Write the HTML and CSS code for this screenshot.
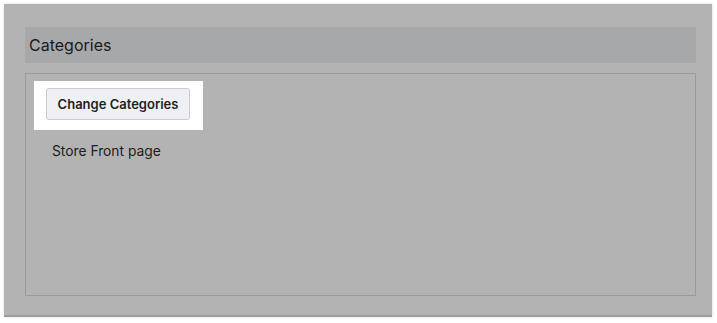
FILE: index.html
```html
<!DOCTYPE html>
<html lang="en">
<head>
    <meta charset="UTF-8">
    <meta name="viewport" content="width=device-width, initial-scale=1.0">
    <title>Categories</title>
    <link rel="stylesheet" href="styles.css">
</head>
<body>

    <!-- Categories panel -->
    <div class="panel">
        <div class="panel-header">Categories</div>

        <div class="panel-body">
            <div class="spotlight">
                <button class="btn" type="button">Change Categories</button>
            </div>
            <div class="category-item">Store Front page</div>
        </div>
    </div>

</body>
</html>
```

FILE: styles.css
```css
body {
    font-family: Inter, "Noto Sans", "Liberation Sans", Arial, sans-serif;
    margin: 0;
    padding: 0;
    background-color: #fff;
    color: #1c1c1e;
}

.panel {
    box-sizing: border-box;
    margin: 4px;
    width: 708px;
    height: 313px;
    padding: 23px 16px 0 21px;
    background-color: #b3b3b3;
    border-bottom: 2px solid #9a9ea4;
    box-shadow: 0 0 3px rgba(0, 0, 0, 0.15);
}

.panel-header {
    height: 36px;
    line-height: 36px;
    padding-left: 4px;
    font-size: 16px;
    background-color: #a7a8aa;
    color: #1a1a1c;
}

.panel-body {
    box-sizing: border-box;
    margin-top: 10px;
    height: 223px;
    padding: 7px 8px;
    border: 1px solid #979a9f;
}

.spotlight {
    display: inline-block;
    padding: 7px 13px 10px 12px;
    background-color: #fff;
}

.btn {
    box-sizing: border-box;
    width: 144px;
    height: 32px;
    font-family: inherit;
    font-size: 13px;
    font-weight: 600;
    color: #1f1f22;
    background-color: #eef0f4;
    border: 1px solid #c9ccd2;
    border-radius: 3px;
}

.category-item {
    margin-top: 11px;
    padding-left: 18px;
    font-size: 13.8px;
    line-height: 20px;
}
```
